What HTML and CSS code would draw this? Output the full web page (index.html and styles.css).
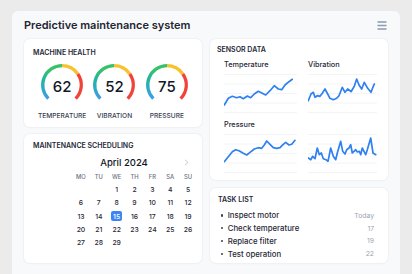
FILE: index.html
```html
<!DOCTYPE html>
<html lang="en">
<head>
    <meta charset="UTF-8">
    <meta name="viewport" content="width=device-width, initial-scale=1.0">
    <link rel="stylesheet" href="styles.css">
    <title>Predictive maintenance system</title>
</head>
<body>
    <div class="panel">
        <header class="topbar">
            <h1>Predictive maintenance system</h1>
            <button class="menu" aria-label="Menu">
                <svg width="10" height="9" viewBox="0 0 10 9">
                    <path d="M0.5 1h9M0.5 4.5h9M0.5 8h9" stroke="#8b9bb0" stroke-width="1.4"/>
                </svg>
            </button>
        </header>

        <main class="layout">
            <div class="col">
                <section class="card health">
                    <h2 class="card-title">Machine health</h2>
                    <div class="gauges">
                        <div class="gauge">
                            <div class="dial">
                                <svg width="44" height="38" viewBox="0 0 44 38">
                                    <defs>
                                        <linearGradient id="cool" gradientUnits="userSpaceOnUse" x1="8" y1="36" x2="20" y2="3">
                                            <stop offset="0" stop-color="#3b9ee8"/>
                                            <stop offset="0.45" stop-color="#20b4a4"/>
                                            <stop offset="0.8" stop-color="#37c26a"/>
                                        </linearGradient>
                                    </defs>
                                    <path d="M8.35 35.65A19.3 19.3 0 0 1 22 2.7" fill="none" stroke="url(#cool)" stroke-width="3.3"/>
                                    <path d="M22 2.7A19.3 19.3 0 0 1 37.81 10.93" fill="none" stroke="#f6c22e" stroke-width="3.3"/>
                                    <path d="M37.81 10.93A19.3 19.3 0 0 1 35.65 35.65" fill="none" stroke="#f0443a" stroke-width="3.3"/>
                                </svg>
                                <span class="value">62</span>
                            </div>
                            <span class="gauge-label">Temperature</span>
                        </div>
                        <div class="gauge">
                            <div class="dial">
                                <svg width="44" height="38" viewBox="0 0 44 38">
                                    <path d="M8.35 35.65A19.3 19.3 0 0 1 22 2.7" fill="none" stroke="url(#cool)" stroke-width="3.3"/>
                                    <path d="M22 2.7A19.3 19.3 0 0 1 37.81 10.93" fill="none" stroke="#f6c22e" stroke-width="3.3"/>
                                    <path d="M37.81 10.93A19.3 19.3 0 0 1 35.65 35.65" fill="none" stroke="#f0443a" stroke-width="3.3"/>
                                </svg>
                                <span class="value">52</span>
                            </div>
                            <span class="gauge-label">Vibration</span>
                        </div>
                        <div class="gauge">
                            <div class="dial">
                                <svg width="44" height="38" viewBox="0 0 44 38">
                                    <path d="M8.35 35.65A19.3 19.3 0 0 1 22 2.7" fill="none" stroke="url(#cool)" stroke-width="3.3"/>
                                    <path d="M22 2.7A19.3 19.3 0 0 1 37.81 10.93" fill="none" stroke="#f6c22e" stroke-width="3.3"/>
                                    <path d="M37.81 10.93A19.3 19.3 0 0 1 35.65 35.65" fill="none" stroke="#f0443a" stroke-width="3.3"/>
                                </svg>
                                <span class="value">75</span>
                            </div>
                            <span class="gauge-label">Pressure</span>
                        </div>
                    </div>
                </section>

                <section class="card schedule">
                    <h2 class="card-title">Maintenance scheduling</h2>
                    <div class="cal">
                        <div class="cal-head">
                            <span class="month">April 2024</span>
                            <svg width="5" height="7" viewBox="0 0 5 7">
                                <path d="M1 0.8L4 3.5L1 6.2" fill="none" stroke="#c3c8cf" stroke-width="1"/>
                            </svg>
                        </div>
                        <div class="weekdays">
                            <span>Mo</span><span>Tu</span><span>We</span><span>Th</span><span>Fr</span><span>Sa</span><span>Su</span>
                        </div>
                        <div class="days">
                            <span></span><span></span><span>1</span><span>2</span><span>3</span><span>4</span><span>5</span>
                            <span>6</span><span>7</span><span>8</span><span>9</span><span>10</span><span>11</span><span>12</span>
                            <span>13</span><span>14</span><span class="today">15</span><span>16</span><span>17</span><span>18</span><span>19</span>
                            <span>20</span><span>21</span><span>22</span><span>23</span><span>24</span><span>25</span><span>26</span>
                            <span>27</span><span>28</span><span>29</span>
                        </div>
                    </div>
                </section>
            </div>

            <div class="col col-right">
                <section class="card sensors">
                    <h2 class="card-title">Sensor data</h2>
                    <div class="plots">
                        <div class="plot">
                            <div class="plot-title">Temperature</div>
                            <svg width="73" height="39" viewBox="0 0 73 39">
                                <path class="grid-line" d="M0 0.5H73M0 10H73M0 19.5H73M0 29H73M0 38.5H73"/>
                                <polyline class="trend" points="0.3,31 4.3,24.3 8.3,22.3 12.7,23.7 16,22.7 19.3,24.7 23.3,22 26.7,23.7 30.3,20 34.3,17.3 38.3,19.3 41.7,21 46,16.7 50.3,11.7 54.3,15 57.7,15.7 61,11 65,7.7 68.3,5.3"/>
                            </svg>
                        </div>
                        <div class="plot">
                            <div class="plot-title">Vibration</div>
                            <svg width="73" height="39" viewBox="0 0 73 39">
                                <path class="grid-line" d="M0 0.5H69M0 10H69M0 19.5H69M0 29H69M0 38.5H69"/>
                                <polyline class="trend" points="0.3,26.7 3,20 5.3,18.3 7,23.3 9.3,21.7 12,22.3 14.3,19.3 17,15 19.7,20 22,24.3 25.3,25.7 28.7,24.3 31,21.7 34.3,13.3 37,18.3 39.7,15 43,17.7 46.3,12.3 48.7,5 51,11 53.7,15 56.3,8.3 59.7,14.3 63,18.3 65.3,12.3 66.3,10"/>
                            </svg>
                        </div>
                        <div class="plot">
                            <div class="plot-title">Pressure</div>
                            <svg width="73" height="39" viewBox="0 0 73 39">
                                <path class="grid-line" d="M0 0.5H73M0 10H73M0 19.5H73M0 29H73M0 38.5H73"/>
                                <polyline class="trend" points="0.3,27.7 4.3,22.7 8.3,17.7 11.7,15.7 15,16.7 19.3,19.3 22.7,21 26,18.3 30.3,15 34.3,13.7 37.7,14.3 40.3,11 42.7,7 46,10.3 49.3,13.7 52.7,14.3 56,13.7 59.3,10.3 61.7,8.3 65,11 67.7,10.3 71,6.3"/>
                            </svg>
                        </div>
                        <div class="plot">
                            <div class="plot-title"></div>
                            <svg width="73" height="39" viewBox="0 0 73 39">
                                <path class="grid-line" d="M0 0.5H69M0 10H69M0 19.5H69M0 29H69M0 38.5H69"/>
                                <polyline class="trend" points="0.3,24 2.7,25.7 4.7,22.3 7,24.7 9.3,14 11.3,20.7 13.3,19 15.3,24.7 18,25.7 20,27.3 22.7,14 25.3,22.3 27.7,25.7 29.3,19 32.7,7.3 34.7,17.3 37,20 38.7,15.7 41,14 42.7,10.7 44.3,19 46,17.3 47.7,15.7 49.3,18 51.3,17.3 52.7,20.7 54.3,14 56,17.3 57.7,20.7 59.3,15.7 62.7,4 65,19 67.7,20.7"/>
                            </svg>
                        </div>
                    </div>
                </section>

                <section class="card tasks">
                    <h2 class="card-title">Task list</h2>
                    <ul class="task-list">
                        <li><span class="task">Inspect motor</span><span class="due">Today</span></li>
                        <li><span class="task">Check temperature</span><span class="due">17</span></li>
                        <li><span class="task">Replace filter</span><span class="due">19</span></li>
                        <li><span class="task">Test operation</span><span class="due">22</span></li>
                    </ul>
                </section>
            </div>
        </main>
    </div>
</body>
</html>
```

FILE: styles.css
```css
* {
    box-sizing: border-box;
}

body {
    margin: 0;
    background-color: #ebebeb;
    font-family: Inter, "Noto Sans", sans-serif;
    color: #1f2937;
}

.panel {
    margin: 11px 12px 0;
    padding: 0 12px 16px;
    background-color: #f8f9fa;
    border-radius: 6px 6px 0 0;
}

.topbar {
    height: 28px;
    display: flex;
    align-items: center;
    justify-content: space-between;
}

.topbar h1 {
    margin: 0;
    font-size: 11px;
    font-weight: 600;
    color: #1e2533;
}

.menu {
    border: none;
    background: none;
    padding: 0;
    display: flex;
    margin-right: 1px;
}

.layout {
    display: grid;
    grid-template-columns: 178px 178px;
    column-gap: 8px;
}

.col {
    display: flex;
    flex-direction: column;
    gap: 7px;
}

.col-right {
    gap: 8px;
}

.card {
    background-color: #fff;
    border-radius: 6px;
    box-shadow: 0 0 0 1px #f0f1f3, 0 1px 2px rgba(0, 0, 0, 0.03);
}

.card-title {
    margin: 0;
    font-size: 7px;
    line-height: 8px;
    font-weight: 600;
    text-transform: uppercase;
    color: #1f2937;
}

/* machine health */
.health {
    padding: 10px 9px 7px;
}

.gauges {
    display: flex;
    justify-content: center;
    padding-left: 3px;
    margin-top: 6px;
}

.gauge {
    width: 56px;
    display: flex;
    flex-direction: column;
    align-items: center;
}

.dial {
    display: grid;
}

.dial svg,
.dial .value {
    grid-area: 1 / 1;
}

.dial svg {
    display: block;
}

.value {
    justify-self: center;
    margin-top: 16px;
    font-size: 15px;
    line-height: 16px;
    font-weight: 500;
    color: #111827;
}

.gauge-label {
    margin-top: 11px;
    font-size: 6.6px;
    line-height: 8px;
    font-weight: 500;
    text-transform: uppercase;
    color: #374151;
}

/* calendar */
.schedule {
    flex: 1;
    padding: 8px 9px 13px;
}

.cal {
    width: 125px;
    margin: 5px 0 0 39px;
}

.cal-head {
    height: 14px;
    display: grid;
    grid-template-columns: 104px 21px;
    align-items: center;
    justify-items: center;
    margin-bottom: 2px;
}

.month {
    font-size: 9.5px;
    font-weight: 500;
    color: #111827;
}

.cal-head svg {
    display: block;
}

.weekdays,
.days {
    display: grid;
    grid-template-columns: repeat(7, 1fr);
    text-align: center;
}

.weekdays span {
    height: 12px;
    line-height: 12px;
    font-size: 5.8px;
    font-weight: 500;
    text-transform: uppercase;
    color: #6b7280;
}

.days span {
    height: 13.3px;
    display: flex;
    align-items: center;
    justify-content: center;
    font-size: 6.8px;
    font-weight: 500;
    color: #1f2937;
}

.days .today {
    justify-self: center;
    width: 11px;
    height: 10px;
    margin-top: 1.6px;
    border-radius: 2px;
    background-color: #3b86f4;
    color: #fff;
}

/* sensors */
.sensors {
    padding: 7px 7px 7px;
}

.plots {
    display: grid;
    grid-template-columns: 73px 73px;
    column-gap: 11px;
    row-gap: 7px;
    padding-left: 7px;
    margin-top: 6px;
}

.plot-title {
    height: 10px;
    line-height: 10px;
    margin-bottom: 4px;
    font-size: 7.3px;
    font-weight: 500;
    color: #1f2937;
}

.plot svg {
    display: block;
}

.grid-line {
    stroke: #f0f1f4;
    stroke-width: 0.8;
    fill: none;
}

.trend {
    fill: none;
    stroke: #2f80f0;
    stroke-width: 1.7;
    stroke-linejoin: round;
    stroke-linecap: round;
}

/* tasks */
.tasks {
    flex: 1;
    padding: 8px 8px 3px;
}

.task-list {
    list-style: none;
    margin: 5px 0 0;
    padding: 0 6px 0 0;
}

.task-list li {
    height: 12.8px;
    display: flex;
    align-items: center;
}

.task-list li::before {
    content: "";
    width: 2.5px;
    height: 2.5px;
    margin: 0 4.7px 0 2.5px;
    border-radius: 50%;
    background-color: #374151;
}

.task {
    flex: 1;
    font-size: 7.8px;
    font-weight: 500;
    color: #1f2937;
}

.due {
    font-size: 6.8px;
    color: #9ca3af;
}
```
